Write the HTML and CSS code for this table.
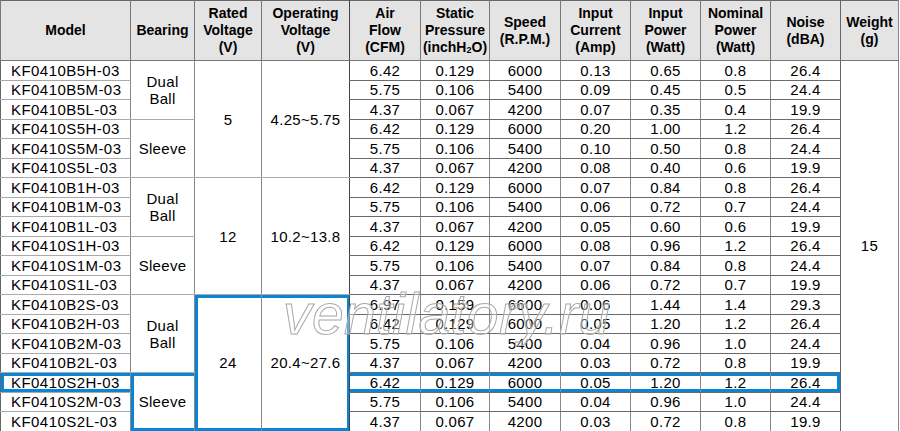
FILE: index.html
```html
<!DOCTYPE html>
<html lang="en">
<head>
<meta charset="utf-8">
<title>KF0410 series specifications</title>
<link rel="stylesheet" href="styles.css">
</head>
<body>
<div class="sheet">
<table class="spec">
  <colgroup>
    <col class="c-model"><col class="c-bearing"><col class="c-rated"><col class="c-oper">
    <col class="c-air"><col class="c-static"><col class="c-speed"><col class="c-cur">
    <col class="c-pow"><col class="c-nom"><col class="c-noise"><col class="c-weight">
  </colgroup>
  <thead>
    <tr>
      <th>Model</th>
      <th>Bearing</th>
      <th>Rated<br>Voltage<br>(V)</th>
      <th>Operating<br>Voltage<br>(V)</th>
      <th class="air">Air<br>Flow<br>(CFM)</th>
      <th>Static<br>Pressure<br>(inchH<sub>2</sub>O)</th>
      <th>Speed<br>(R.P.M.)</th>
      <th>Input<br>Current<br>(Amp)</th>
      <th>Input<br>Power<br>(Watt)</th>
      <th>Nominal<br>Power<br>(Watt)</th>
      <th>Noise<br>(dBA)</th>
      <th class="wt">Weight<br>(g)</th>
    </tr>
  </thead>
  <tbody>
    <tr><td class="model">KF0410B5H-03</td><td class="span" rowspan="3">Dual<br>Ball</td><td class="span" rowspan="6">5</td><td class="span" rowspan="6">4.25~5.75</td><td class="d air">6.42</td><td class="d">0.129</td><td class="d">6000</td><td class="d">0.13</td><td class="d">0.65</td><td class="d">0.8</td><td class="d">26.4</td><td class="span wt" rowspan="19">15</td></tr>
    <tr><td class="model">KF0410B5M-03</td><td class="d air">5.75</td><td class="d">0.106</td><td class="d">5400</td><td class="d">0.09</td><td class="d">0.45</td><td class="d">0.5</td><td class="d">24.4</td></tr>
    <tr><td class="model">KF0410B5L-03</td><td class="d air">4.37</td><td class="d">0.067</td><td class="d">4200</td><td class="d">0.07</td><td class="d">0.35</td><td class="d">0.4</td><td class="d">19.9</td></tr>
    <tr><td class="model">KF0410S5H-03</td><td class="span" rowspan="3">Sleeve</td><td class="d air">6.42</td><td class="d">0.129</td><td class="d">6000</td><td class="d">0.20</td><td class="d">1.00</td><td class="d">1.2</td><td class="d">26.4</td></tr>
    <tr><td class="model">KF0410S5M-03</td><td class="d air">5.75</td><td class="d">0.106</td><td class="d">5400</td><td class="d">0.10</td><td class="d">0.50</td><td class="d">0.8</td><td class="d">24.4</td></tr>
    <tr><td class="model">KF0410S5L-03</td><td class="d air">4.37</td><td class="d">0.067</td><td class="d">4200</td><td class="d">0.08</td><td class="d">0.40</td><td class="d">0.6</td><td class="d">19.9</td></tr>
    <tr><td class="model">KF0410B1H-03</td><td class="span" rowspan="3">Dual<br>Ball</td><td class="span" rowspan="6">12</td><td class="span" rowspan="6">10.2~13.8</td><td class="d air">6.42</td><td class="d">0.129</td><td class="d">6000</td><td class="d">0.07</td><td class="d">0.84</td><td class="d">0.8</td><td class="d">26.4</td></tr>
    <tr><td class="model">KF0410B1M-03</td><td class="d air">5.75</td><td class="d">0.106</td><td class="d">5400</td><td class="d">0.06</td><td class="d">0.72</td><td class="d">0.7</td><td class="d">24.4</td></tr>
    <tr><td class="model">KF0410B1L-03</td><td class="d air">4.37</td><td class="d">0.067</td><td class="d">4200</td><td class="d">0.05</td><td class="d">0.60</td><td class="d">0.6</td><td class="d">19.9</td></tr>
    <tr><td class="model">KF0410S1H-03</td><td class="span" rowspan="3">Sleeve</td><td class="d air">6.42</td><td class="d">0.129</td><td class="d">6000</td><td class="d">0.08</td><td class="d">0.96</td><td class="d">1.2</td><td class="d">26.4</td></tr>
    <tr><td class="model">KF0410S1M-03</td><td class="d air">5.75</td><td class="d">0.106</td><td class="d">5400</td><td class="d">0.07</td><td class="d">0.84</td><td class="d">0.8</td><td class="d">24.4</td></tr>
    <tr><td class="model">KF0410S1L-03</td><td class="d air">4.37</td><td class="d">0.067</td><td class="d">4200</td><td class="d">0.06</td><td class="d">0.72</td><td class="d">0.7</td><td class="d">19.9</td></tr>
    <tr><td class="model">KF0410B2S-03</td><td class="span" rowspan="4">Dual<br>Ball</td><td class="span hl-l" rowspan="7">24</td><td class="span hl-r" rowspan="7">20.4~27.6</td><td class="d air">6.97</td><td class="d">0.159</td><td class="d">6600</td><td class="d">0.06</td><td class="d">1.44</td><td class="d">1.4</td><td class="d">29.3</td></tr>
    <tr><td class="model">KF0410B2H-03</td><td class="d air">6.42</td><td class="d">0.129</td><td class="d">6000</td><td class="d">0.05</td><td class="d">1.20</td><td class="d">1.2</td><td class="d">26.4</td></tr>
    <tr><td class="model">KF0410B2M-03</td><td class="d air">5.75</td><td class="d">0.106</td><td class="d">5400</td><td class="d">0.04</td><td class="d">0.96</td><td class="d">1.0</td><td class="d">24.4</td></tr>
    <tr><td class="model">KF0410B2L-03</td><td class="d air">4.37</td><td class="d">0.067</td><td class="d">4200</td><td class="d">0.03</td><td class="d">0.72</td><td class="d">0.8</td><td class="d">19.9</td></tr>
    <tr class="sel"><td class="model hl-model">KF0410S2H-03</td><td class="span hl-sleeve" rowspan="3">Sleeve</td><td class="d air hl-mid">6.42</td><td class="d hl-mid">0.129</td><td class="d hl-mid">6000</td><td class="d hl-mid">0.05</td><td class="d hl-mid">1.20</td><td class="d hl-mid">1.2</td><td class="d hl-last">26.4</td></tr>
    <tr><td class="model">KF0410S2M-03</td><td class="d air">5.75</td><td class="d">0.106</td><td class="d">5400</td><td class="d">0.04</td><td class="d">0.96</td><td class="d">1.0</td><td class="d">24.4</td></tr>
    <tr><td class="model">KF0410S2L-03</td><td class="d air">4.37</td><td class="d">0.067</td><td class="d">4200</td><td class="d">0.03</td><td class="d">0.72</td><td class="d">0.8</td><td class="d">19.9</td></tr>
  </tbody>
</table>
<span class="watermark">ventilatory.ru</span>
</div>
</body>
</html>
```

FILE: styles.css
```css
html, body {
  margin: 0;
  padding: 0;
  background: #ffffff;
}

.sheet {
  position: relative;
  width: 900px;
  height: 431px;
  overflow: hidden;
}

.spec {
  border-collapse: collapse;
  table-layout: fixed;
  width: 899px;
  font-family: "Liberation Sans", Arial, sans-serif;
  color: #000;
  border-top: 1px solid #666;
  border-left: 1px solid #666;
  border-right: 1px solid #888;
}

.c-model { width: 130px; }
.c-bearing { width: 64px; }
.c-rated { width: 67px; }
.c-oper { width: 88px; }
.c-air { width: 71px; }
.c-static { width: 69px; }
.c-speed { width: 71px; }
.c-cur { width: 70px; }
.c-pow { width: 70px; }
.c-nom { width: 70px; }
.c-noise { width: 70px; }
.c-weight { width: 58px; }

.spec th {
  height: 59px;
  padding: 0;
  background: #e4e4e4;
  font-size: 14px;
  font-weight: bold;
  line-height: 17px;
  text-align: center;
  vertical-align: middle;
  border-left: 1px solid #777;
  border-bottom: 1px solid #777;
}

.spec th sub {
  font-size: 9px;
  vertical-align: -1px;
  line-height: 0;
}

.spec td {
  height: 18.5px;
  padding: 0;
  font-size: 15px;
  letter-spacing: 0.3px;
  line-height: 17px;
  text-align: center;
  vertical-align: middle;
  border-left: 1px solid #8a8a8a;
  border-bottom: 1px solid #aaa;
}

.spec td.model {
  text-align: left;
  padding-left: 10px;
  letter-spacing: 0.45px;
  border-left: none;
}

.spec td.d {
  border-bottom-color: #6a6a6a;
}

.spec .air {
  border-left: 1px solid #444;
}

.spec .wt {
  border-left: 1px solid #666;
}

.spec td.span {
  border-bottom-color: #aaa;
}

/* highlighted selection in blue */
.spec .hl-l {
  box-shadow: inset 3px 0 0 #0a84d4, inset 0 3px 0 #0a84d4, inset 0 -3px 0 #0a84d4;
}

.spec .hl-r {
  box-shadow: inset -2px 0 0 #0a84d4, inset 0 3px 0 #0a84d4, inset 0 -3px 0 #0a84d4;
}

.spec .hl-model {
  box-shadow: inset 3px 0 0 #0a84d4, inset 0 3px 0 #0a84d4, inset 0 -3px 0 #0a84d4;
}

.spec .hl-sleeve {
  box-shadow: inset 3px 0 0 #0a84d4, inset 0 3px 0 #0a84d4, inset 0 -3px 0 #0a84d4;
}

.spec .hl-mid {
  box-shadow: inset 0 3px 0 #0a84d4, inset 0 -3px 0 #0a84d4;
}

.spec .hl-last {
  box-shadow: inset -3px 0 0 #0a84d4, inset 0 3px 0 #0a84d4, inset 0 -3px 0 #0a84d4;
}

.watermark {
  position: absolute;
  left: 283px;
  top: 286px;
  font-family: "Liberation Sans", Arial, sans-serif;
  font-style: italic;
  font-size: 57px;
  line-height: 57px;
  letter-spacing: 0.4px;
  color: rgba(255, 255, 255, 0.35);
  -webkit-text-stroke: 1px #a8a8a8;
  pointer-events: none;
  white-space: nowrap;
}
```
